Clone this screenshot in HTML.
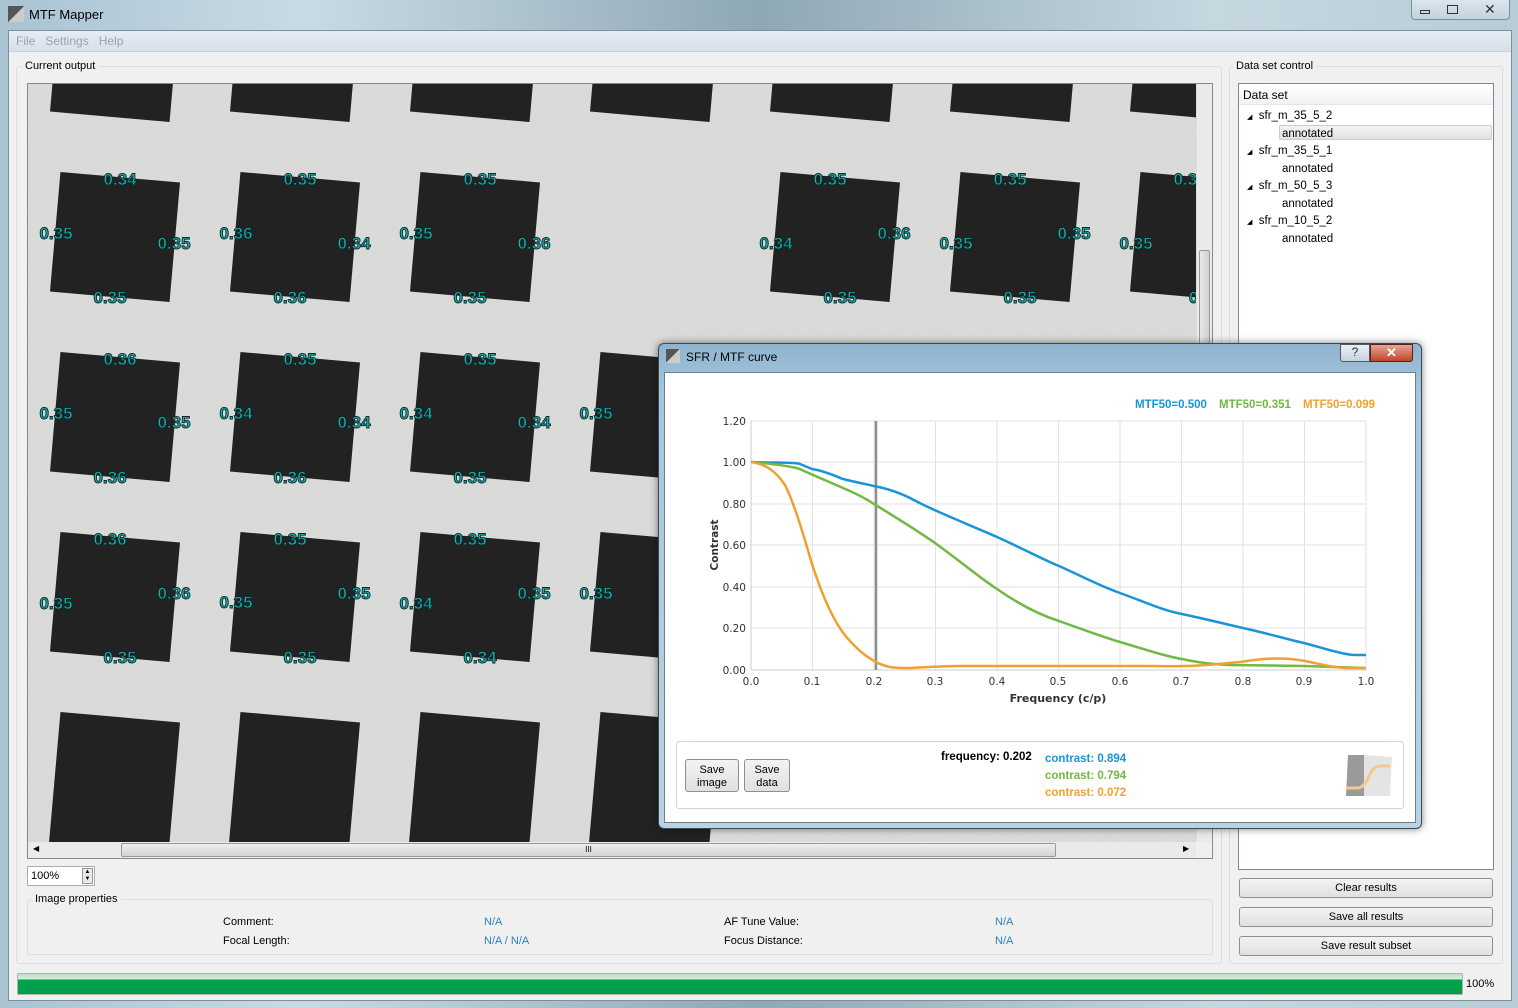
<!DOCTYPE html>
<html><head><meta charset="utf-8"><style>
*{margin:0;padding:0;box-sizing:border-box}
body{width:1518px;height:1008px;overflow:hidden;position:relative;font-family:"Liberation Sans",sans-serif;font-size:11px;color:#000;background:linear-gradient(90deg,#a9c3d3 0%,#c8dbe4 20%,#8fa8b6 50%,#c5d8e0 80%,#b7ccd6 100%)}
.abs{position:absolute}
.gb{position:absolute;border:1px solid #d5dfe5;border-radius:3px}
.gbl{position:absolute;background:#f0f0f0;padding:0 3px;font-size:11px}
.btn{position:absolute;border:1px solid #8e8f8f;border-radius:3px;background:linear-gradient(#f3f3f3,#e0e0e0);text-align:center;font-size:11px}
</style></head><body>
<div class="abs" style="left:8px;top:6px;width:16px;height:16px;background:linear-gradient(135deg,#555 50%,#ccc 50%)"></div>
<div class="abs" style="left:29px;top:7px;font-size:13px">MTF Mapper</div>
<div class="abs" style="left:1411px;top:0;width:99px;height:20px;border:1px solid #7b8f9b;border-top:none;border-radius:0 0 4px 4px;background:linear-gradient(#dbe6ee,#c2d3de)"></div>
<div class="abs" style="left:1420px;top:10px;width:10px;height:4px;border:1px solid #333"></div>
<div class="abs" style="left:1447px;top:5px;width:11px;height:9px;border:1px solid #333"></div>
<div class="abs" style="left:1484px;top:1px;font-size:14px;color:#333">✕</div>
<div class="abs" style="left:8px;top:30px;width:1504px;height:971px;background:#f0f0f0;border:1px solid #7f8e98"></div>
<div class="abs" style="left:9px;top:31px;width:1502px;height:21px;background:linear-gradient(#e6ecf4,#d7e0ea);border-bottom:1px solid #c5d0da"></div>
<div class="abs" style="left:16px;top:34px;font-size:12px;color:#9aa2aa">File&nbsp;&nbsp;&nbsp;Settings&nbsp;&nbsp;&nbsp;Help</div>
<div class="gb" style="left:16px;top:66px;width:1206px;height:898px"></div>
<div class="gbl" style="left:22px;top:60px">Current output</div>
<div class="abs" style="left:27px;top:83px;width:1186px;height:776px;border:1px solid #888;background:#f0f0f0"></div>
<svg class="abs" style="left:28px;top:84px" width="1168" height="758" viewBox="28 84 1168 758">
<defs><filter id="n"><feTurbulence baseFrequency="0.9" numOctaves="1" seed="3"/><feColorMatrix values="0 0 0 0 0.84 0 0 0 0 0.84 0 0 0 0 0.83 0 0 0 0.5 0"/></filter></defs>
<rect x="28" y="84" width="1168" height="758" fill="#d9d9d7"/>
<rect x="28" y="84" width="1168" height="758" filter="url(#n)" opacity="0.5"/>
<g fill="#222">
<g transform="translate(0,-180)"><rect x="55" y="177" width="120" height="120" transform="rotate(5 115 237)"/><rect x="235" y="177" width="120" height="120" transform="rotate(5 295 237)"/><rect x="415" y="177" width="120" height="120" transform="rotate(5 475 237)"/><rect x="595" y="177" width="120" height="120" transform="rotate(5 655 237)"/><rect x="775" y="177" width="120" height="120" transform="rotate(5 835 237)"/><rect x="955" y="177" width="120" height="120" transform="rotate(5 1015 237)"/><rect x="1135" y="177" width="120" height="120" transform="rotate(5 1195 237)"/></g>
<rect x="55" y="177" width="120" height="120" transform="rotate(5 115 237)"/><rect x="235" y="177" width="120" height="120" transform="rotate(5 295 237)"/><rect x="415" y="177" width="120" height="120" transform="rotate(5 475 237)"/><rect x="775" y="177" width="120" height="120" transform="rotate(5 835 237)"/><rect x="955" y="177" width="120" height="120" transform="rotate(5 1015 237)"/><rect x="1135" y="177" width="120" height="120" transform="rotate(5 1195 237)"/>
<g transform="translate(0,180)"><rect x="55" y="177" width="120" height="120" transform="rotate(5 115 237)"/><rect x="235" y="177" width="120" height="120" transform="rotate(5 295 237)"/><rect x="415" y="177" width="120" height="120" transform="rotate(5 475 237)"/><rect x="595" y="177" width="120" height="120" transform="rotate(5 655 237)"/></g>
<g transform="translate(0,360)"><rect x="55" y="177" width="120" height="120" transform="rotate(5 115 237)"/><rect x="235" y="177" width="120" height="120" transform="rotate(5 295 237)"/><rect x="415" y="177" width="120" height="120" transform="rotate(5 475 237)"/><rect x="595" y="177" width="120" height="120" transform="rotate(5 655 237)"/></g>
<g transform="translate(0,540)"><rect x="55" y="177" width="120" height="140" transform="rotate(5 115 237)"/><rect x="235" y="177" width="120" height="140" transform="rotate(5 295 237)"/><rect x="415" y="177" width="120" height="140" transform="rotate(5 475 237)"/><rect x="595" y="177" width="120" height="140" transform="rotate(5 655 237)"/></g>
</g>
<g font-family="Liberation Sans,sans-serif" font-size="17" fill="#1bb0b0" stroke="#0a2a2a" stroke-width="0.9" text-anchor="middle" font-weight="bold">
<text x="120" y="185">0.34</text><text x="56" y="239">0.35</text><text x="174" y="249">0.35</text><text x="110" y="303">0.35</text>
<text x="300" y="185">0.35</text><text x="236" y="239">0.36</text><text x="354" y="249">0.34</text><text x="290" y="303">0.36</text>
<text x="480" y="185">0.35</text><text x="416" y="239">0.35</text><text x="534" y="249">0.36</text><text x="470" y="303">0.35</text>
<text x="830" y="185">0.35</text><text x="776" y="249">0.34</text><text x="894" y="239">0.36</text><text x="840" y="303">0.35</text>
<text x="1010" y="185">0.35</text><text x="956" y="249">0.35</text><text x="1074" y="239">0.35</text><text x="1020" y="303">0.35</text>
<text x="1190" y="185">0.35</text><text x="1136" y="249">0.35</text><text x="1196" y="303">0.</text>
<text x="120" y="365">0.36</text><text x="56" y="419">0.35</text><text x="174" y="428">0.35</text><text x="110" y="483">0.36</text>
<text x="300" y="365">0.35</text><text x="236" y="419">0.34</text><text x="354" y="428">0.34</text><text x="290" y="483">0.36</text>
<text x="480" y="365">0.35</text><text x="416" y="419">0.34</text><text x="534" y="428">0.34</text><text x="470" y="483">0.35</text>
<text x="596" y="419">0.35</text>
<text x="110" y="545">0.36</text><text x="56" y="609">0.35</text><text x="174" y="599">0.36</text><text x="120" y="663">0.35</text>
<text x="290" y="545">0.35</text><text x="236" y="608">0.35</text><text x="354" y="599">0.35</text><text x="300" y="663">0.35</text>
<text x="470" y="545">0.35</text><text x="416" y="609">0.34</text><text x="534" y="599">0.35</text><text x="480" y="663">0.34</text>
<text x="596" y="599">0.35</text>
</g>
</svg>
<div class="abs" style="left:1196px;top:84px;width:16px;height:758px;background:#eaeaea;border-left:1px solid #ddd"></div>
<div class="abs" style="left:1199px;top:250px;width:11px;height:100px;background:linear-gradient(90deg,#e8e8e8,#d0d0d0);border:1px solid #999;border-radius:2px"></div>
<div class="abs" style="left:28px;top:842px;width:1168px;height:16px;background:#eaeaea"></div>
<div class="abs" style="left:121px;top:843px;width:935px;height:14px;background:linear-gradient(#eee,#d4d4d4);border:1px solid #999;border-radius:2px;text-align:center;font-size:8px;line-height:12px">III</div>
<div class="abs" style="left:33px;top:844px;font-size:8px">◀</div><div class="abs" style="left:1183px;top:844px;font-size:8px">▶</div>
<div class="abs" style="left:27px;top:866px;width:68px;height:20px;background:#fff;border:1px solid #abadb3;font-size:11px;padding:3px 3px">100%</div>
<div class="abs" style="left:82px;top:868px;width:11px;height:16px;border:1px solid #999;background:#e8e8e8;font-size:6px;line-height:7px;text-align:center">▲<br>▼</div>
<div class="gb" style="left:27px;top:899px;width:1186px;height:56px"></div>
<div class="gbl" style="left:32px;top:893px">Image properties</div>
<div class="abs" style="left:223px;top:916px">Comment:</div><div class="abs" style="left:223px;top:935px">Focal Length:</div>
<div class="abs" style="left:484px;top:916px;color:#2a82c0">N/A</div><div class="abs" style="left:484px;top:935px;color:#2a82c0">N/A / N/A</div>
<div class="abs" style="left:724px;top:916px">AF Tune Value:</div><div class="abs" style="left:724px;top:935px">Focus Distance:</div>
<div class="abs" style="left:995px;top:916px;color:#2a82c0">N/A</div><div class="abs" style="left:995px;top:935px;color:#2a82c0">N/A</div>
<div class="gb" style="left:1229px;top:66px;width:274px;height:898px"></div>
<div class="gbl" style="left:1233px;top:60px">Data set control</div>
<div class="abs" style="left:1238px;top:83px;width:256px;height:787px;background:#fff;border:1px solid #828790"></div>
<div class="abs" style="left:1239px;top:84px;width:254px;height:21px;background:linear-gradient(#fff,#f1f2f4);border-bottom:1px solid #e5e5e5;padding:4px 4px;font-size:12px">Data set</div>
<div class="abs" style="left:1279px;top:125px;width:213px;height:15px;background:linear-gradient(#f4f4f4,#e2e2e2);border:1px solid #ccc;border-radius:2px"></div>
<div class="abs" style="left:1247px;top:108px;font-size:11.5px;line-height:17px"><span style="font-size:7px">◢</span>&nbsp;&nbsp;sfr_m_35_5_2<br><span style="padding-left:35px">annotated</span><br><span style="font-size:7px">◢</span>&nbsp;&nbsp;sfr_m_35_5_1<br><span style="padding-left:35px">annotated</span><br><span style="font-size:7px">◢</span>&nbsp;&nbsp;sfr_m_50_5_3<br><span style="padding-left:35px">annotated</span><br><span style="font-size:7px">◢</span>&nbsp;&nbsp;sfr_m_10_5_2<br><span style="padding-left:35px">annotated</span></div>
<div class="btn" style="left:1239px;top:878px;width:254px;height:20px;line-height:18px">Clear results</div>
<div class="btn" style="left:1239px;top:907px;width:254px;height:20px;line-height:18px">Save all results</div>
<div class="btn" style="left:1239px;top:936px;width:254px;height:20px;line-height:18px">Save result subset</div>
<div class="abs" style="left:17px;top:973px;width:1446px;height:22px;border:1px solid #b2b2b2;border-radius:2px;background:linear-gradient(#b8e0c4 0%,#d8eedc 25%,#00a24b 30%,#00a04a 100%)"></div>
<div class="abs" style="left:1466px;top:978px">100%</div>
<div class="abs" style="left:658px;top:343px;width:764px;height:486px;border:1px solid #3a4a55;border-radius:6px;background:linear-gradient(#8fb4cf,#a5c6dc 10%,#b9d3e2);box-shadow:0 0 8px rgba(0,0,0,.5)"></div>
<div class="abs" style="left:666px;top:349px;width:14px;height:14px;background:linear-gradient(135deg,#555 50%,#ccc 50%)"></div>
<div class="abs" style="left:686px;top:350px;font-size:12px">SFR / MTF curve</div>
<div class="abs" style="left:1340px;top:344px;width:30px;height:18px;border:1px solid #556;border-radius:0 0 0 3px;background:linear-gradient(#e8eff5,#c5d3de);text-align:center;font-size:12px;color:#333">?</div>
<div class="abs" style="left:1370px;top:344px;width:43px;height:18px;border:1px solid #522;border-radius:0 0 3px 0;background:linear-gradient(#e7a494,#c3452c);text-align:center;color:#fff;font-size:13px;font-weight:bold">✕</div>
<div class="abs" style="left:664px;top:372px;width:752px;height:451px;background:#fff;border:1px solid #6d7f8b"></div>
<svg class="abs" style="left:665px;top:373px" width="750" height="449" viewBox="665 373 750 449">
<g stroke="#e2e2e2" stroke-width="1">
<line x1="751" y1="421" x2="1366" y2="421"/><line x1="751" y1="462" x2="1366" y2="462"/><line x1="751" y1="504" x2="1366" y2="504"/><line x1="751" y1="545" x2="1366" y2="545"/><line x1="751" y1="587" x2="1366" y2="587"/><line x1="751" y1="628" x2="1366" y2="628"/>
<line x1="812.5" y1="421" x2="812.5" y2="670"/><line x1="874" y1="421" x2="874" y2="670"/><line x1="935.5" y1="421" x2="935.5" y2="670"/><line x1="997" y1="421" x2="997" y2="670"/><line x1="1058.5" y1="421" x2="1058.5" y2="670"/><line x1="1120" y1="421" x2="1120" y2="670"/><line x1="1181.5" y1="421" x2="1181.5" y2="670"/><line x1="1243" y1="421" x2="1243" y2="670"/><line x1="1304.5" y1="421" x2="1304.5" y2="670"/><line x1="1366" y1="421" x2="1366" y2="670"/>
</g>
<line x1="751" y1="421" x2="751" y2="670" stroke="#ccc"/><line x1="751" y1="670" x2="1366" y2="670" stroke="#ccc"/>
<line x1="876" y1="421" x2="876" y2="670" stroke="#8a8f92" stroke-width="2.5"/>
<g fill="none" stroke-width="2.5" stroke-linejoin="round">
<path stroke="#1895d8" d="M751,462 C775,463 795,462 800,464 L812,469 C825,471 835,476 843,479 C855,482 865,484 874,486 C890,489 900,493 910,498 C930,509 960,521 997,537 C1030,552 1040,558 1059,566 C1090,580 1100,586 1120,593 C1150,604 1165,611 1182,614 C1210,620 1225,624 1243,628 C1270,634 1290,640 1304,643 C1330,650 1345,655 1356,655 L1366,655"/>
<path stroke="#6fb944" d="M751,462 C775,464 790,466 800,469 C810,474 825,480 843,488 C860,495 868,500 874,504 C900,520 915,529 935,543 C960,561 980,578 997,589 C1020,605 1040,615 1059,621 C1090,632 1100,636 1120,642 C1150,651 1165,656 1182,659 C1200,663 1212,664 1230,665 L1304,666 L1366,668"/>
<path stroke="#f0a030" d="M751,462 C765,464 775,470 785,485 C795,505 805,540 812,564 C822,595 835,625 849,640 C860,652 868,658 878,663 C888,668 895,668 911,668 C930,667 940,666 960,666 L1150,666 C1190,667 1210,665 1240,662 C1265,658 1285,657 1305,661 C1320,664 1330,667 1345,668 L1366,668"/>
</g>
<g font-family="DejaVu Sans,sans-serif" font-size="10.5" fill="#333" text-anchor="end">
<text x="746" y="425">1.20</text><text x="746" y="466">1.00</text><text x="746" y="508">0.80</text><text x="746" y="549">0.60</text><text x="746" y="591">0.40</text><text x="746" y="632">0.20</text><text x="746" y="674">0.00</text>
</g>
<g font-family="DejaVu Sans,sans-serif" font-size="10.5" fill="#333" text-anchor="middle">
<text x="751" y="685">0.0</text><text x="812" y="685">0.1</text><text x="874" y="685">0.2</text><text x="935" y="685">0.3</text><text x="997" y="685">0.4</text><text x="1058" y="685">0.5</text><text x="1120" y="685">0.6</text><text x="1181" y="685">0.7</text><text x="1243" y="685">0.8</text><text x="1304" y="685">0.9</text><text x="1366" y="685">1.0</text>
<text x="1058" y="702" font-weight="bold" font-size="11">Frequency (c/p)</text>
<text transform="translate(718,545) rotate(-90)" font-weight="bold" font-size="10.5">Contrast</text>
</g>
<g font-family="Liberation Sans,sans-serif" font-size="11.5" font-weight="bold">
<text x="1135" y="408" fill="#1895d8">MTF50=0.500</text><text x="1219" y="408" fill="#6fb944">MTF50=0.351</text><text x="1303" y="408" fill="#f0a030">MTF50=0.099</text>
</g>
</svg>
<div class="abs" style="left:676px;top:741px;width:728px;height:68px;border:1px solid #ccd6de;border-radius:3px;background:#fff"></div>
<div class="btn" style="left:685px;top:759px;width:54px;height:33px;padding-top:4px;line-height:13px">Save<br>image</div>
<div class="btn" style="left:744px;top:759px;width:46px;height:33px;padding-top:4px;line-height:13px">Save<br>data</div>
<div class="abs" style="left:941px;top:751px;font-weight:bold;font-size:11.5px">frequency: 0.202</div>
<div class="abs" style="left:1045px;top:751px;font-weight:bold;font-size:11.5px;line-height:17px"><span style="color:#1895d8">contrast: 0.894</span><br><span style="color:#6fb944">contrast: 0.794</span><br><span style="color:#f0a030">contrast: 0.072</span></div>
<svg class="abs" style="left:1344px;top:752px" width="50" height="46"><polygon points="4,3 20,3 20,44 2,44" fill="#9a9a9a"/><polygon points="20,3 48,5 46,44 20,44" fill="#e4e4e4"/><path d="M2,36 L14,36 Q20,36 26,22 Q30,14 36,14 L46,14" stroke="#f2c98a" stroke-width="3" fill="none"/></svg>
</body></html>
